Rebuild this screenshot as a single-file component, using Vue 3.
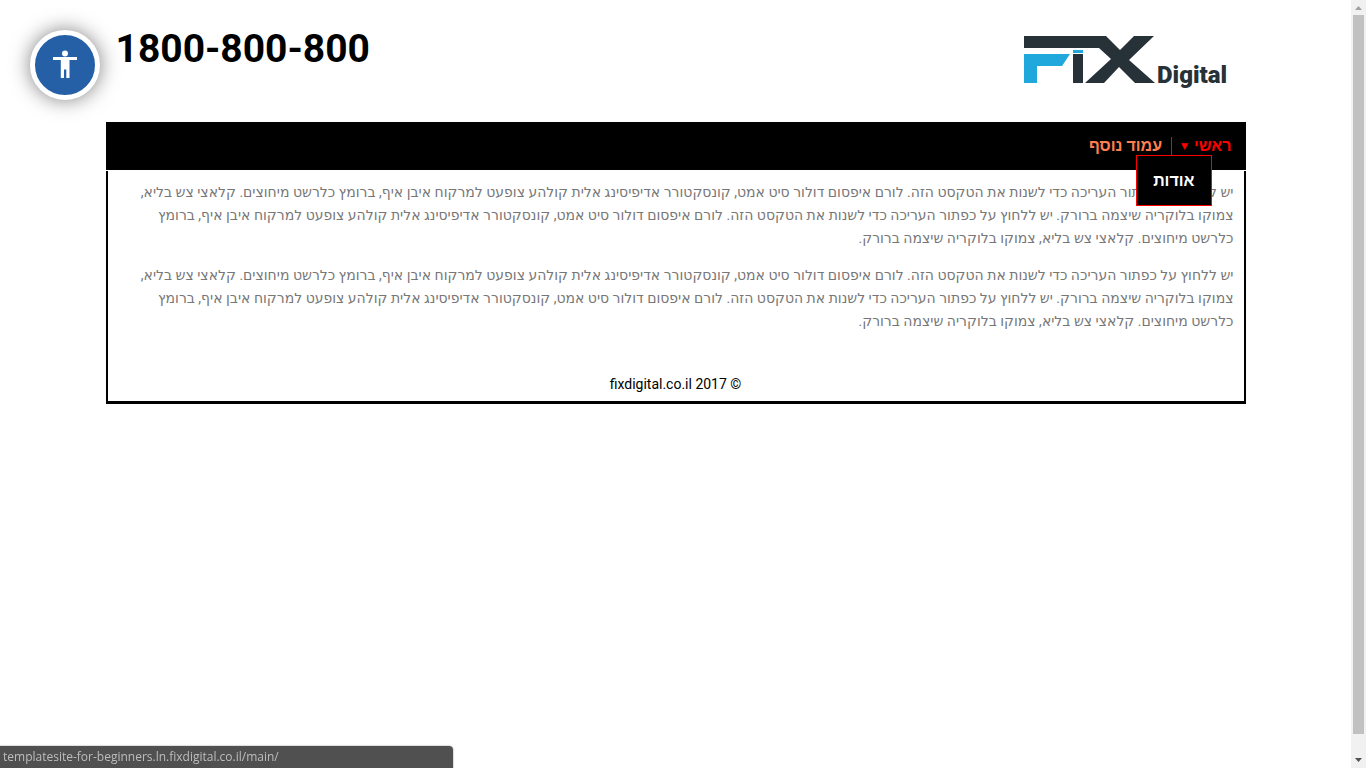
<script setup>
const sentence = 'לורם איפסום דולור סיט אמט, קונסקטורר אדיפיסינג אלית קולהע צופעט למרקוח איבן איף, ברומץ כלרשט מיחוצים. קלאצי צש בליא, צמוקו בלוקריה שיצמה ברורק.'
const lead = 'יש ללחוץ על כפתור העריכה כדי לשנות את הטקסט הזה.'
const paragraph = `${lead} ${sentence} ${lead} ${sentence}`
const paragraphs = [paragraph, paragraph]
</script>

<template>
  <div class="window">
    <div class="page" dir="rtl">
      <button class="access" type="button" aria-label="נגישות">
        <svg viewBox="0 0 24 30" width="24" height="30" aria-hidden="true">
          <circle cx="12" cy="3.500" r="3" />
          <path d="M0 7H24V10H16.500V28H13.300V19.500H11V28H7.800V10H0Z" />
        </svg>
      </button>

      <div class="container">
        <header class="header">
          <a class="logo" href="#" aria-label="Fix Digital">
            <svg viewBox="0 0 206 56" width="206" height="56">
              <path class="dark" d="M1 1H83L97 15L111 1H131L106 25L132 48H112L96 32L81 48H62L88 24L76 13H1Z" />
              <path class="blue" d="M1 19H47L39 31H14V48H1Z" />
              <path class="blue" d="M50 15H60V18H50Z" />
              <path class="dark" d="M50 19H60V48H50Z" />
              <text class="word" x="134" y="48">Digital</text>
            </svg>
          </a>
          <h1 class="phone" dir="ltr">1800-800-800</h1>
        </header>

        <nav class="nav">
          <ul class="menu">
            <li class="item first">
              <a class="link active" href="#">ראשי <span class="caret">▼</span></a>
              <ul class="submenu">
                <li><a class="sublink" href="#">אודות</a></li>
              </ul>
            </li>
            <li class="item"><a class="link" href="#">עמוד נוסף</a></li>
          </ul>
        </nav>

        <div class="content">
          <main>
            <p v-for="(text, i) in paragraphs" :key="i">{{ text }}</p>
          </main>
          <footer class="footer" dir="ltr">fixdigital.co.il 2017 ©</footer>
        </div>
      </div>

      <div class="status" dir="ltr">templatesite-for-beginners.ln.fixdigital.co.il/main/</div>
    </div>

    <div class="scrollbar" aria-hidden="true">
      <svg viewBox="0 0 15 15" width="15" height="15"><path fill="#a0a0a0" d="M4 10L7.500 6L11 10Z" /></svg>
      <div class="thumb"></div>
      <svg class="down" viewBox="0 0 15 15" width="15" height="15"><path fill="#505050" d="M4 5L7.500 9L11 5Z" /></svg>
    </div>
  </div>
</template>

<style>
body {
  margin: 0;
  background: #fff;
}
</style>

<style scoped>
.window {
  display: grid;
  grid-template-columns: 1fr 15px;
  min-height: 100vh;
  font-family: Roboto, "DejaVu Sans", sans-serif;
}
.container {
  max-width: 1140px;
  margin: 0 auto;
}
.header {
  display: flex;
  justify-content: space-between;
  align-items: flex-start;
  height: 122px;
  padding: 0 17px 0 10px;
  box-sizing: border-box;
}
.logo {
  margin-top: 35px;
}
.logo svg {
  display: block;
  overflow: visible;
}
.dark {
  fill: #263238;
}
.blue {
  fill: #20a7db;
}
.word {
  fill: #263238;
  font: 900 24px Roboto, sans-serif;
  direction: ltr;
}
.phone {
  margin: 25px 0 0;
  font-size: 39px;
  line-height: 48px;
  font-weight: 700;
  color: #000;
}
.access {
  position: fixed;
  left: 30px;
  top: 30px;
  width: 70px;
  height: 70px;
  padding: 0;
  display: flex;
  align-items: center;
  justify-content: center;
  border: 5px solid #fff;
  border-radius: 50%;
  background: #2560a6;
  box-shadow: 0 0 20px rgba(0, 0, 0, 0.5);
}
.access svg {
  fill: #fff;
}
.nav {
  background: #000;
  height: 48px;
  margin-bottom: 1px;
  font-family: Roboto, "Liberation Sans", sans-serif;
}
.menu,
.submenu {
  list-style: none;
  margin: 0;
  padding: 0;
}
.menu {
  display: flex;
  padding: 15px 14px 0;
}
.item {
  position: relative;
  height: 18px;
}
.first {
  padding-left: 9px;
  border-left: 1px solid #f00;
}
.item + .item {
  padding-right: 9px;
}
.link {
  display: flex;
  align-items: center;
  gap: 6px;
  font-size: 16px;
  line-height: 18px;
  font-weight: 700;
  color: #ff7f50;
  text-decoration: none;
  white-space: nowrap;
}
.active {
  color: #f00;
}
.caret {
  font: 9px "DejaVu Sans", sans-serif;
}
.submenu {
  position: absolute;
  top: 18px;
  right: 20px;
  border: 1px solid #f00;
  background: #000;
}
.sublink {
  display: block;
  padding: 0 16px;
  font-size: 16px;
  line-height: 49px;
  font-weight: 700;
  color: #fff;
  text-decoration: none;
  white-space: nowrap;
}
.content {
  border: 2px solid #000;
  border-top: 0;
  border-bottom-width: 3px;
  padding: 10px 10px 7px;
}
.content p {
  margin: 0 0 14px;
  font-size: 14px;
  line-height: 23px;
  color: #777;
}
.footer {
  margin-top: 41px;
  text-align: center;
  font-size: 14px;
  line-height: 20px;
  color: #000;
}
.status {
  position: fixed;
  left: 0;
  bottom: 0;
  width: 453px;
  box-sizing: border-box;
  padding-left: 3px;
  border-radius: 0 4px 0 0;
  background: #505050;
  box-shadow: 0 0 1px 1px #ddd;
  font: 12px/22px "Open Sans", sans-serif;
  color: #bdbdbd;
}
.scrollbar {
  display: flex;
  flex-direction: column;
  background: #f1f1f1;
}
.scrollbar svg {
  display: block;
}
.thumb {
  height: 719px;
  margin: 0 2px;
  background: #c1c1c1;
}
.down {
  margin-top: auto;
}
</style>
